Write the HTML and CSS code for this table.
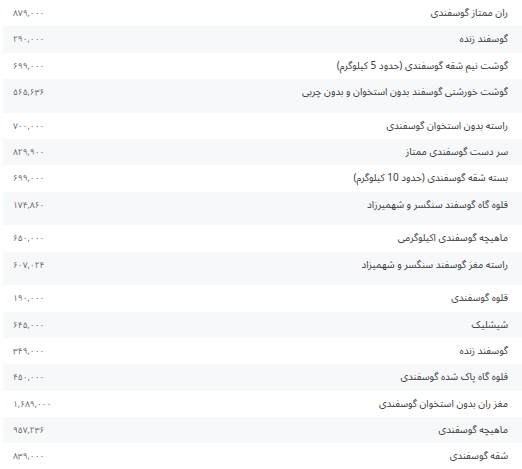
FILE: index.html
```html
<!DOCTYPE html>
<html lang="fa" dir="rtl">
<head>
<meta charset="utf-8">
<link rel="stylesheet" href="styles.css">
</head>
<body>
<div class="table">
  <div class="row"><span class="name">ران ممتاز گوسفندی</span><span class="price">۸۷۹,۰۰۰</span></div>
  <div class="row alt"><span class="name">گوسفند زنده</span><span class="price">۲۹۰,۰۰۰</span></div>
  <div class="row"><span class="name">گوشت نیم شقه گوسفندی (حدود 5 کیلوگرم)</span><span class="price">۶۹۹,۰۰۰</span></div>
  <div class="row alt tall"><span class="name">گوشت خورشتی گوسفند بدون استخوان و بدون چربی</span><span class="price">۵۶۵,۶۳۶</span></div>
  <div class="row"><span class="name">راسته بدون استخوان گوسفندی</span><span class="price">۷۰۰,۰۰۰</span></div>
  <div class="row alt"><span class="name">سر دست گوسفندی ممتاز</span><span class="price">۸۲۹,۹۰۰</span></div>
  <div class="row"><span class="name">بسته شقه گوسفندی (حدود 10 کیلوگرم)</span><span class="price">۶۹۹,۰۰۰</span></div>
  <div class="row alt tall"><span class="name">قلوه گاه گوسفند سنگسر و شهمیرزاد</span><span class="price">۱۷۴,۸۶۰</span></div>
  <div class="row"><span class="name">ماهیچه گوسفندی اکیلوگرمی</span><span class="price">۶۵۰,۰۰۰</span></div>
  <div class="row alt tall"><span class="name">راسته مغز گوسفند سنگسر و شهمیزاد</span><span class="price">۶۰۷,۰۲۴</span></div>
  <div class="row"><span class="name">قلوه گوسفندی</span><span class="price">۱۹۰,۰۰۰</span></div>
  <div class="row alt"><span class="name">شیشلیک</span><span class="price">۶۴۵,۰۰۰</span></div>
  <div class="row"><span class="name">گوسفند زنده</span><span class="price">۳۴۹,۰۰۰</span></div>
  <div class="row alt"><span class="name">قلوه گاه پاک شده گوسفندی</span><span class="price">۴۵۰,۰۰۰</span></div>
  <div class="row"><span class="name">مغز ران بدون استخوان گوسفندی</span><span class="price">۱,۶۸۹,۰۰۰</span></div>
  <div class="row alt"><span class="name">ماهیچه گوسفندی</span><span class="price">۹۵۷,۲۳۶</span></div>
  <div class="row"><span class="name">شقه گوسفندی</span><span class="price">۸۳۹,۰۰۰</span></div>
</div>
</body>
</html>
```
FILE: styles.css
```css
html, body {
  margin: 0;
  padding: 0;
  background: #ffffff;
}
body {
  font-family: "Noto Sans Arabic", "Vazirmatn", "DejaVu Sans", sans-serif;
  font-size: 10px;
  color: #3a3a3a;
}
.table {
  width: 519px;
  display: flex;
  flex-direction: column;
}
.row {
  display: flex;
  justify-content: space-between;
  align-items: baseline;
  box-sizing: border-box;
  height: 26.3px;
  padding: 6px 14px 0 10px;
  line-height: 14px;
}
.row.alt {
  background: #f7f8fa;
}
.row.tall {
  height: 33.8px;
}
.name {
  color: #3a3a3a;
  font-size: 10px;
}
.price {
  color: #5f5f5f;
  font-size: 8.5px;
  direction: ltr;
}
```
